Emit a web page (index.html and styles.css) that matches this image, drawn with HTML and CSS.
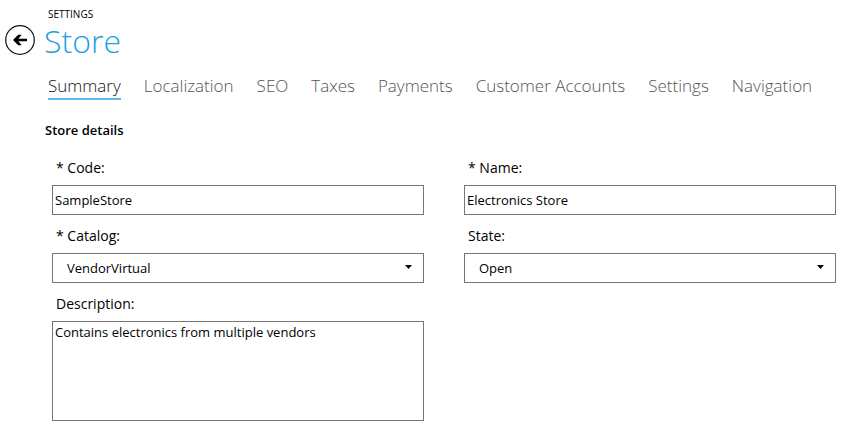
FILE: index.html
```html
<!DOCTYPE html>
<html lang="en">
<head>
<meta charset="utf-8">
<meta name="viewport" content="width=device-width, initial-scale=1">
<title>Store settings</title>
<link rel="stylesheet" href="styles.css">
</head>
<body>
<header class="page-header">
  <button class="back" type="button" aria-label="Back">
    <svg class="back-icon" viewBox="0 0 30 30" aria-hidden="true">
      <circle cx="15" cy="15" r="14.3" fill="none" stroke="#111" stroke-width="1.2"/>
      <path d="M22 13.7v2.6h-8.6l3.4 3.9h-3.6L8 15l5.200-5.200h3.600l-3.400 3.900z" fill="#000"/>
    </svg>
  </button>
  <div class="heading">
    <p class="section">SETTINGS</p>
    <h1 class="title">Store</h1>
  </div>
</header>
<nav class="tabs">
  <a class="tab active" href="#summary" aria-current="page">Summary</a>
  <a class="tab" href="#localization">Localization</a>
  <a class="tab" href="#seo">SEO</a>
  <a class="tab" href="#taxes">Taxes</a>
  <a class="tab" href="#payments">Payments</a>
  <a class="tab" href="#accounts">Customer Accounts</a>
  <a class="tab" href="#settings">Settings</a>
  <a class="tab" href="#navigation">Navigation</a>
</nav>
<main class="content" id="summary">
  <h2 class="subtitle">Store details</h2>
  <form class="fields">
    <div class="field">
      <label class="label" for="code">* Code:</label>
      <input class="control" id="code" type="text" value="SampleStore">
    </div>
    <div class="field">
      <label class="label" for="name">* Name:</label>
      <input class="control" id="name" type="text" value="Electronics Store">
    </div>
    <div class="field">
      <label class="label" for="catalog">* Catalog:</label>
      <div class="select">
        <select class="control" id="catalog"><option>VendorVirtual</option></select>
        <svg class="caret" viewBox="0 0 7 4" aria-hidden="true"><path d="M0 0h7L3.500 4z"/></svg>
      </div>
    </div>
    <div class="field">
      <label class="label" for="state">State:</label>
      <div class="select">
        <select class="control" id="state"><option>Open</option></select>
        <svg class="caret" viewBox="0 0 7 4" aria-hidden="true"><path d="M0 0h7L3.500 4z"/></svg>
      </div>
    </div>
    <div class="field">
      <label class="label" for="description">Description:</label>
      <textarea class="control area" id="description">Contains electronics from multiple vendors</textarea>
    </div>
  </form>
</main>
</body>
</html>
```

FILE: styles.css
```css
* { box-sizing: border-box; }

body {
  margin: 0;
  background: #fff;
  color: #000;
  font-family: "Open Sans", "Noto Sans", sans-serif;
  font-size: 13px;
}

.page-header {
  display: flex;
  align-items: flex-end;
  gap: 9px;
  padding: 7px 5px 0;
}

.back {
  display: block;
  width: 30px;
  height: 30px;
  margin-bottom: 5px;
  padding: 0;
  border: 0;
  background: none;
}

.back-icon { display: block; width: 100%; height: 100%; }

.section {
  margin: 0;
  padding-left: 4px;
  font-size: 10px;
  line-height: 14px;
}

.title {
  margin: 0;
  color: #1ba1e2;
  font-size: 32px;
  font-weight: 300;
  line-height: 39px;
}

.tabs {
  display: flex;
  gap: 23px;
  padding: 14px 16px 0 48px;
}

.tab {
  border-bottom: 2px solid transparent;
  color: #555;
  font-size: 17px;
  font-weight: 300;
  line-height: 24px;
  text-decoration: none;
  white-space: nowrap;
}

.tab.active {
  border-color: #5bbcec;
  color: #111;
}

.content { padding: 20px 16px 12px 52px; }

.subtitle {
  margin: 0 0 0 -7px;
  font-size: 13px;
  font-weight: 600;
  line-height: 20px;
}

.fields {
  display: grid;
  grid-template-columns: 1fr 1fr;
  column-gap: 40px;
  row-gap: 8px;
  margin-top: 15px;
}

.label {
  display: block;
  height: 30px;
  padding: 3px 4px;
  font-size: 14px;
  line-height: 20px;
}

.control {
  display: block;
  width: 100%;
  height: 30px;
  margin: 0;
  padding: 0 2px;
  border: 1px solid #767676;
  border-radius: 0;
  outline: 0;
  background: #fff;
  color: #000;
  font: inherit;
}

.select { position: relative; }

.select .control {
  padding-left: 14px;
  appearance: none;
}

.caret {
  position: absolute;
  top: 12px;
  right: 12px;
  width: 7px;
  height: 4px;
  pointer-events: none;
}

.area {
  height: 100px;
  padding-top: 1px;
  line-height: 18px;
  resize: none;
}
```
